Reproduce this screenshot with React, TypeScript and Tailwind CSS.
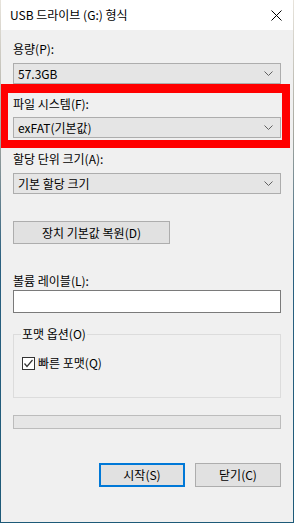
import React from "react";

const font = { fontFamily: '"Noto Sans CJK KR", "Noto Sans", sans-serif' };

function Chevron() {
  return (
    <svg width="9" height="5" viewBox="0 0 9 5" className="shrink-0">
      <path d="M0.5 0.5 L4.5 4.5 L8.5 0.5" fill="none" stroke="#606060" strokeWidth="1" />
    </svg>
  );
}

function Combo({ text }: { text: string }) {
  return (
    <div className="h-[21px] border border-[#adadad] bg-[#e5e5e5] flex items-center justify-between pl-[4px] pr-[7px] text-[12px] leading-none text-black">
      <span>{text}</span>
      <Chevron />
    </div>
  );
}

function Label({ text, className = "" }: { text: string; className?: string }) {
  return <div className={"text-[12px] leading-[16px] text-black " + className}>{text}</div>;
}

export default function App() {
  return (
    <div
      style={font}
      className="relative w-[294px] h-[523px] px-px pb-px bg-[linear-gradient(to_bottom,#e8e4dc_0%,#a8a8a0_25%,#2a6080_50%,#1d5a78_100%)] flex flex-col overflow-hidden"
    >
      {/* title bar */}
      <div className="h-[30px] bg-white flex items-center justify-between pl-[9px] pr-[11px] shrink-0">
        <span className="text-[12px] leading-none text-black">USB 드라이브 (G:) 형식</span>
        <svg width="11" height="11" viewBox="0 0 11 11">
          <path d="M0.5 0.5 L10.5 10.5 M10.5 0.5 L0.5 10.5" stroke="#000" strokeWidth="1" />
        </svg>
      </div>

      {/* body */}
      <div className="flex-1 bg-[#f0f0f0] px-[12px] flex flex-col">
        <Label text="용량(P):" className="mt-[11px]" />
        <div className="mt-[6px]">
          <Combo text="57.3GB" />
        </div>
        <Label text="파일 시스템(F):" className="mt-[12px]" />
        <div className="mt-[5px]">
          <Combo text="exFAT(기본값)" />
        </div>
        <Label text="할당 단위 크기(A):" className="mt-[13px]" />
        <div className="mt-[6px]">
          <Combo text="기본 할당 크기" />
        </div>

        <div className="mt-[27px]">
          <button className="w-[157px] h-[23px] border border-[#adadad] bg-[#e1e1e1] text-[12px] leading-none text-black flex items-center justify-center">
            장치 기본값 복원(D)
          </button>
        </div>

        <Label text="볼륨 레이블(L):" className="mt-[29px]" />
        <div className="mt-[1px] h-[23px] border border-[#7a7a7a] bg-white" />

        <fieldset className="mt-[13px] h-[72px] border border-[#dcdcdc] px-[8px]">
          <legend className="ml-[-1px] px-[1px] text-[12px] leading-[16px] text-black">포맷 옵션(O)</legend>
          <div className="mt-[13px] flex items-center gap-[3px]">
            <div className="w-[13px] h-[13px] border border-[#333333] bg-white flex items-center justify-center">
              <svg width="11" height="11" viewBox="0 0 11 11">
                <path d="M1.5 5.5 L4 8.5 L9.5 2" fill="none" stroke="#333333" strokeWidth="1.2" />
              </svg>
            </div>
            <span className="text-[12px] leading-[16px] text-black">빠른 포맷(Q)</span>
          </div>
        </fieldset>

        <div className="mt-[17px] h-[14px] border border-[#bcbcbc] bg-[#e6e6e6]" />

        <div className="mt-[34px] flex justify-end gap-[10px]">
          <button className="w-[86px] h-[24px] border-2 border-[#0078d7] bg-[#e1e1e1] text-[12px] leading-none text-black flex items-center justify-center">
            시작(S)
          </button>
          <button className="w-[86px] h-[24px] border border-[#adadad] bg-[#e1e1e1] text-[12px] leading-none text-black flex items-center justify-center">
            닫기(C)
          </button>
        </div>
      </div>

      {/* red annotation box */}
      <div className="absolute left-[1px] top-[84px] w-[289px] h-[64px] border-[8px] border-t-[9px] border-l-[7px] border-[#ff0000] pointer-events-none" />
    </div>
  );
}
